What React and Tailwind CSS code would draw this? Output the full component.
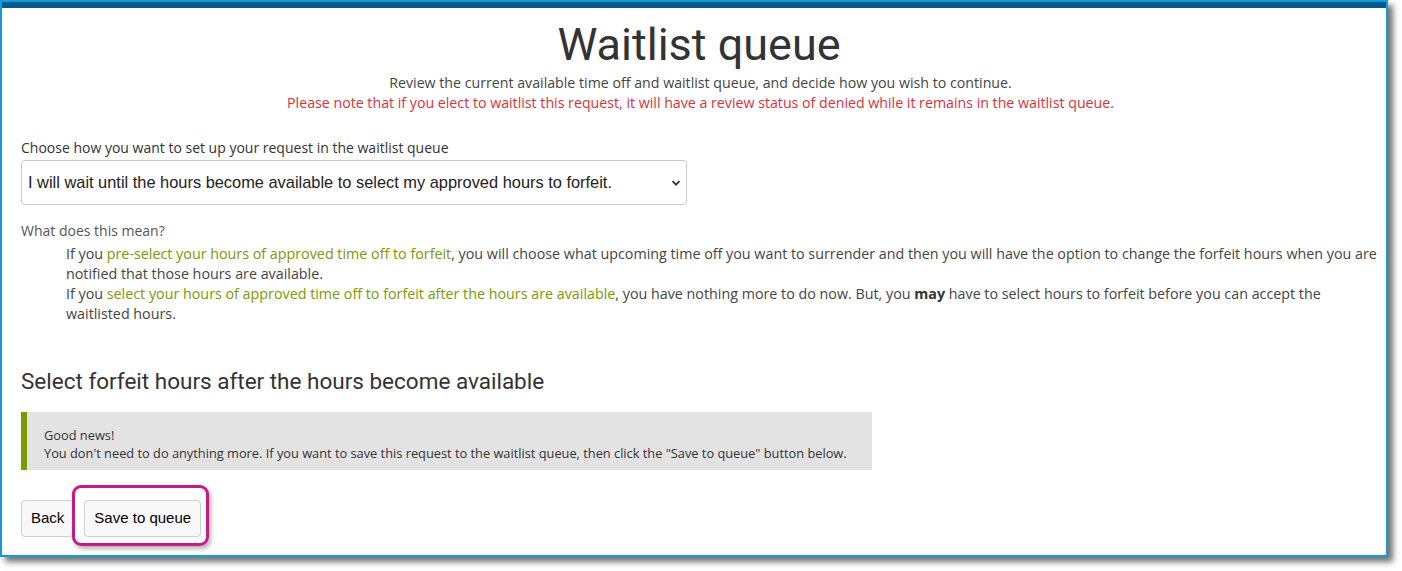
import React from "react";

const green = "text-[#7a9a01]";

export default function App() {
  return (
    <div className="w-[1402px] h-[571px] bg-white">
      <div className="w-[1388px] h-[557px] border-2 border-[#119bd9] bg-white shadow-[5px_5px_6px_rgba(0,0,0,0.55)] overflow-hidden">
        <div className="h-[6px] bg-[#005b8a]" />
        <div className="pl-[19px] pr-[6px] font-['Open_Sans',sans-serif] text-[#3a3a3a]">
          {/* titolo */}
          <div className="text-center">
            <h1 className="font-['Roboto',sans-serif] text-[45px] leading-[56px] pt-[9px] pr-[3px] text-[#333]">Waitlist queue</h1>
            <p className="text-[14.2px] leading-[20px] text-[#444]">
              Review the current available time off and waitlist queue, and decide how you wish to continue.
            </p>
            <p className="text-[14.2px] leading-[20px] text-[#d7323d]">
              Please note that if you elect to waitlist this request, it will have a review status of denied while it remains in the waitlist queue.
            </p>
          </div>

          {/* scelta */}
          <div className="mt-[25px]">
            <label className="block text-[14px] leading-[20px] text-[#333]">
              Choose how you want to set up your request in the waitlist queue
            </label>
            <div className="relative mt-[2px] w-[666px] h-[45px] border border-[#c8c8c8] rounded-[4px] flex items-center">
              <span className="pl-[6px] font-['Liberation_Sans',Arial,sans-serif] text-[16.4px] text-[#222]">
                I will wait until the hours become available to select my approved hours to forfeit.
              </span>
              <svg className="absolute right-[5px] top-[17px]" width="10" height="10" viewBox="0 0 10 10">
                <path d="M1.5 3.2 L5 6.7 L8.5 3.2" fill="none" stroke="#333" strokeWidth="1.8" />
              </svg>
            </div>
          </div>

          {/* spiegazione */}
          <div className="mt-[16px] text-[14px] leading-[20px]">
            <p className="text-[#555]">What does this mean?</p>
            <div className="ml-[45px] mt-[3px] text-[14.3px] text-[#444]">
              <p>
                If you <span className={green}>pre-select your hours of approved time off to forfeit</span>, you will choose what upcoming time off you want to surrender and then you will have the option to change the forfeit hours when you are notified that those hours are available.
              </p>
              <p>
                If you <span className={green}>select your hours of approved time off to forfeit after the hours are available</span>, you have nothing more to do now. But, you <b className="text-[#333]">may</b> have to select hours to forfeit before you can accept the waitlisted hours.
              </p>
            </div>
          </div>

          {/* sezione */}
          <h2 className="mt-[42px] font-['Roboto',sans-serif] text-[22.5px] leading-[30px] text-[#333]">
            Select forfeit hours after the hours become available
          </h2>

          <div className="mt-[16px] w-[851px] h-[58px] bg-[#e3e3e3] border-l-[6px] border-[#7a9a01] pl-[17px] pt-[14px] text-[12.8px] leading-[18px] text-[#333]">
            <p>Good news!</p>
            <p>You don't need to do anything more. If you want to save this request to the waitlist queue, then click the "Save to queue" button below.</p>
          </div>

          {/* bottoni */}
          <div className="mt-[30px] flex gap-[10px] font-['Liberation_Sans',Arial,sans-serif] text-[15px] text-black">
            <button className="h-[37px] px-[9px] border border-[#cfcfcf] rounded-[4px] bg-[#f8f8f8]">Back</button>
            <div className="relative">
              <button className="h-[37px] px-[9px] border border-[#cfcfcf] rounded-[4px] bg-[#f8f8f8]">Save to queue</button>
              <span className="absolute left-[-12px] top-[-15px] w-[137px] h-[61px] border-[3px] border-[#c81a85] rounded-[9px] shadow-[2px_3px_4px_rgba(0,0,0,0.3)] pointer-events-none" />
            </div>
          </div>
        </div>
      </div>
    </div>
  );
}
